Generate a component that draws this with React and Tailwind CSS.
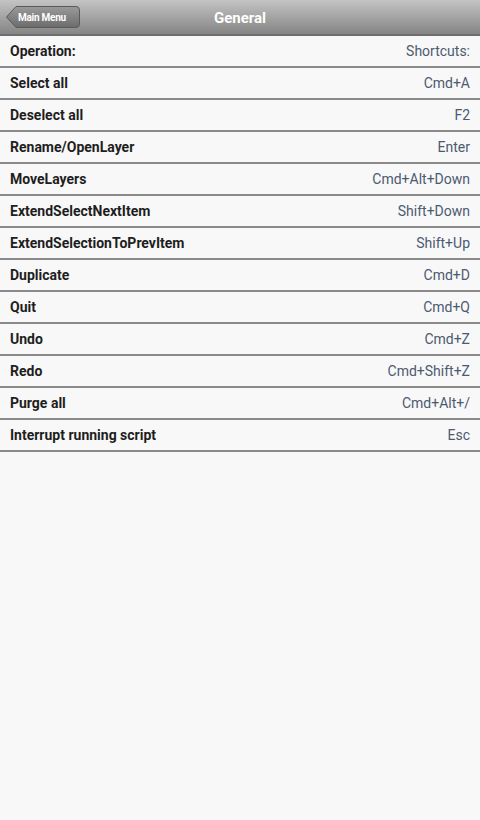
const rows = [
  ["Operation:", "Shortcuts:"],
  ["Select all", "Cmd+A"],
  ["Deselect all", "F2"],
  ["Rename/OpenLayer", "Enter"],
  ["MoveLayers", "Cmd+Alt+Down"],
  ["ExtendSelectNextItem", "Shift+Down"],
  ["ExtendSelectionToPrevItem", "Shift+Up"],
  ["Duplicate", "Cmd+D"],
  ["Quit", "Cmd+Q"],
  ["Undo", "Cmd+Z"],
  ["Redo", "Cmd+Shift+Z"],
  ["Purge all", "Cmd+Alt+/"],
  ["Interrupt running script", "Esc"],
];

function Header() {
  return (
    <div className="relative h-[36px] flex items-center justify-center pt-[2px] bg-gradient-to-b from-[#c4c4c4] to-[#858585] border-b-2 border-[#6e6e6e]">
      <div className="absolute left-[6px] top-[6px] h-[22px] w-[74px] flex items-center">
        <svg width="74" height="22" viewBox="0 0 74 22" className="absolute inset-0">
          <defs>
            <linearGradient id="bb" x1="0" y1="0" x2="0" y2="1">
              <stop offset="0" stopColor="#9a9a9a" />
              <stop offset="1" stopColor="#6c6c6c" />
            </linearGradient>
          </defs>
          <path d="M0.5 11 L10 0.5 H70 Q73.5 0.5 73.5 4 V18 Q73.5 21.5 70 21.5 H10 Z" fill="url(#bb)" stroke="#5a5a5a" />
        </svg>
        <span className="relative pl-[12px] text-[10px] font-bold text-white tracking-tight">Main Menu</span>
      </div>
      <span className="text-[15px] font-bold text-white">General</span>
    </div>
  );
}

export default function App() {
  return (
    <div className="w-[480px] h-[820px] bg-[#f8f8f8] font-['Roboto',sans-serif]">
      <Header />
      <div>
        {rows.map((r, i) => (
          <div key={i} className="h-[32px] flex items-center justify-between px-[10px] border-b-2 border-[#8a8a8a] bg-[#f8f8f8]">
            <span className="text-[14px] font-bold text-[#1e1e1e]">{r[0]}</span>
            <span className="text-[14px] text-[#4c5a70]">{r[1]}</span>
          </div>
        ))}
      </div>
    </div>
  );
}
